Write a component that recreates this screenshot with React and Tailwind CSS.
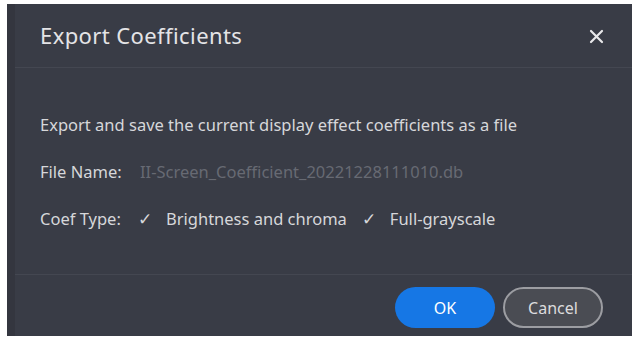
import React from "react";

export default function App() {
  return (
    <div className="w-[640px] h-[340px] bg-white pt-[4px] pl-[7px] overflow-hidden" style={{ fontFamily: '"Noto Sans", "Open Sans", sans-serif' }}>
      <div className="w-[625px] h-[332px] bg-[#393c46] flex flex-col border-l-[8px] border-[#34363f]">
        <div className="h-[64px] flex items-center justify-between pl-[25px] pr-[28px] border-b border-[#444751]">
          <span className="text-[22px] tracking-[0.4px] text-[#e4e4e6]">Export Coefficients</span>
          <svg width="15" height="15" viewBox="0 0 15 15" className="mt-[1px]">
            <path d="M2 2 L13 13 M13 2 L2 13" stroke="#e8e8ea" strokeWidth="2.2" strokeLinecap="round" />
          </svg>
        </div>
        <div className="flex-1 flex flex-col pl-[25px] pt-[47px] text-[16.5px] text-[#d6d7da] gap-[27px]">
          <div className="leading-[20px]">Export and save the current display effect coefficients as a file</div>
          <div className="leading-[20px] flex">
            <span className="w-[100px]">File Name:</span>
            <span className="text-[#676a73]">II-Screen_Coefficient_20221228111010.db</span>
          </div>
          <div className="leading-[20px] flex items-center">
            <span className="w-[98px]">Coef Type:</span>
            <span className="mr-[14px]">✓</span>
            <span className="mr-[15px]">Brightness and chroma</span>
            <span className="mr-[14px]">✓</span>
            <span>Full-grayscale</span>
          </div>
        </div>
        <div className="h-[62px] border-t border-[#444751] flex items-center justify-end gap-[8px] pr-[29px] pt-[4px]">
          <button className="w-[100px] h-[41px] rounded-full bg-[#1677e5] text-white text-[16px]">OK</button>
          <button className="w-[100px] h-[41px] rounded-full bg-[#4a4c53] border-[2px] border-[#9c9da2] text-[#dcdcde] text-[16px]">Cancel</button>
        </div>
      </div>
    </div>
  );
}
